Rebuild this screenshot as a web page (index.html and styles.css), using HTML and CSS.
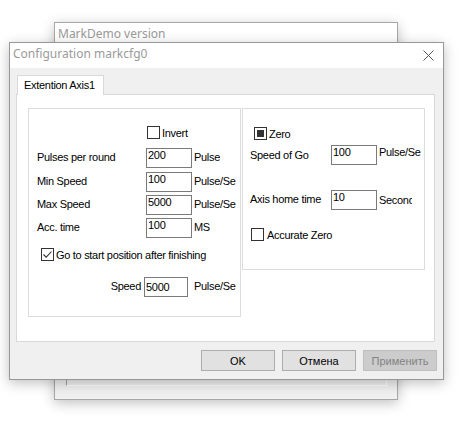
FILE: index.html
```html
<!DOCTYPE html>
<html>
<head>
<meta charset="utf-8">
<title>Configuration markcfg0</title>
<link rel="stylesheet" href="styles.css">
</head>
<body>
<div class="desk">
  <div class="win back">
    <div class="titlebar"><span class="title">MarkDemo version</span></div>
    <div class="back-body"><div class="sunken"></div></div>
  </div>
  <div class="win dialog">
    <div class="titlebar">
      <span class="title">Configuration markcfg0</span>
      <svg class="close" width="11" height="11" viewBox="0 0 11 11"><path d="M0.5 0.5L10.5 10.5M10.5 0.5L0.5 10.5" stroke="#555" stroke-width="1" fill="none"/></svg>
    </div>
    <div class="dlg-body">
      <div class="tabctl">
        <div class="tabstrip"><div class="tab">Extention Axis1</div></div>
        <div class="tabpage">
          <div class="group group-left">
            <div class="check-row invert-row"><span class="cb"></span><span class="cb-label">Invert</span></div>
            <div class="fields">
              <div class="field"><span class="lbl">Pulses per round</span><span class="tb">200</span><span class="unit">Pulse</span></div>
              <div class="field"><span class="lbl">Min Speed</span><span class="tb">100</span><span class="unit">Pulse/Se</span></div>
              <div class="field"><span class="lbl">Max Speed</span><span class="tb">5000</span><span class="unit">Pulse/Se</span></div>
              <div class="field"><span class="lbl">Acc. time</span><span class="tb">100</span><span class="unit">MS</span></div>
            </div>
            <div class="check-row go-row"><span class="cb"><svg width="11" height="11" viewBox="0 0 11 11"><path d="M1.5 5.5L4.2 8.2L9.5 2.5" stroke="#333" stroke-width="1.1" fill="none"/></svg></span><span class="cb-label">Go to start position after finishing</span></div>
            <div class="speed-row"><span class="speed-lbl">Speed</span><span class="tb tb-speed">5000</span><span class="unit speed-unit">Pulse/Se</span></div>
          </div>
          <div class="group group-right">
            <div class="check-row zero-row"><span class="cb"><span class="fill"></span></span><span class="cb-label">Zero</span></div>
            <div class="rfield go-speed"><span class="lbl">Speed of Go</span><span class="tb">100</span><span class="unit">Pulse/Se</span></div>
            <div class="rfield home-time"><span class="lbl">Axis home time</span><span class="tb">10</span><span class="unit">Seconds</span></div>
            <div class="check-row acc-row"><span class="cb"></span><span class="cb-label">Accurate Zero</span></div>
          </div>
        </div>
      </div>
      <div class="buttons">
        <button class="btn">OK</button>
        <button class="btn">Отмена</button>
        <button class="btn" disabled>Применить</button>
      </div>
    </div>
  </div>
</div>
</body>
</html>
```
FILE: styles.css
```css
* { box-sizing: border-box; }
html, body { margin: 0; padding: 0; background: #fff; }
body {
  font-family: "Liberation Sans", Arial, sans-serif;
  font-size: 11px;
  line-height: 13px;
  color: #000;
}
.desk { position: relative; width: 468px; height: 432px; overflow: hidden; background: #fff; }

.win {
  position: absolute;
  display: flex;
  flex-direction: column;
  background: #f0f0f0;
  border: 1px solid #a6a6a6;
  box-shadow: 0 3px 12px rgba(0, 0, 0, 0.25);
}
.back { left: 54px; top: 22px; width: 344px; height: 378px; }
.dialog { left: 9px; top: 42px; width: 435px; height: 338px; border-color: #979797; }

.titlebar {
  flex: none;
  display: flex;
  justify-content: space-between;
  align-items: flex-start;
  background: #fff;
  padding: 3px 9px 0 3px;
}
.back .titlebar { height: 19px; }
.dialog .titlebar { height: 25px; }
.title {
  font-family: "Noto Sans", "Open Sans", sans-serif;
  font-size: 12px;
  line-height: 16px;
  color: #9a9a9a;
  white-space: nowrap;
}
.close { margin-top: 4px; flex: none; }

.back-body { flex: 1; display: flex; padding: 0 10px 13px 11px; }
.sunken {
  flex: 1;
  border-left: 1px solid #a0a0a0;
  border-top: 1px solid #a0a0a0;
  border-right: 1px solid #fff;
  border-bottom: 1px solid #fff;
}

.dlg-body { flex: 1; display: flex; flex-direction: column; padding: 7px 6px 8px 6px; }
.tabctl { flex: 1; display: flex; flex-direction: column; margin-right: 2px; }
.tabstrip { flex: none; height: 19px; display: flex; padding-left: 1px; }
.tab {
  position: relative;
  z-index: 1;
  width: 87px;
  height: 20px;
  border: 1px solid #d9d9d9;
  border-bottom: 0;
  background: #fff;
  padding: 3px 0 0 6px;
  letter-spacing: -0.3px;
  white-space: nowrap;
}
.tabpage {
  flex: 1;
  display: flex;
  align-items: flex-start;
  gap: 1px;
  background: #fff;
  border: 1px solid #d9d9d9;
  padding: 13px 0 0 11px;
}

.group {
  flex: none;
  display: flex;
  flex-direction: column;
  align-items: flex-start;
  border: 1px solid #dcdcdc;
  background: #fff;
  letter-spacing: -0.3px;
  white-space: nowrap;
}
.group-left { width: 213px; height: 209px; padding-left: 8px; }
.group-right { width: 183px; height: 162px; padding-left: 7px; }

.check-row { display: flex; align-items: flex-start; }
.cb {
  flex: none;
  width: 13px;
  height: 13px;
  border: 1px solid #333;
  background: #fff;
  display: flex;
  align-items: center;
  justify-content: center;
}
.cb .fill { width: 7px; height: 7px; background: #333; }
.cb-label { margin-left: 2px; padding-top: 1px; }

.invert-row { margin: 17px 0 0 110px; }
.fields { display: flex; flex-direction: column; margin-top: 8px; }
.field { display: flex; align-items: flex-start; height: 20px; }
.field + .field { margin-top: 3px; }
.field:nth-child(2) { margin-top: 4px; }
.field .lbl { width: 109px; padding-top: 3px; }

.tb {
  flex: none;
  width: 46px;
  height: 20px;
  border: 1px solid #7a7a7a;
  background: #fff;
  padding: 0 0 0 1px;
}
.unit { margin-left: 2px; padding-top: 3px; overflow: hidden; }

.go-row { margin: 10px 0 0 4px; }
.speed-row { display: flex; align-items: flex-start; margin-top: 15px; }
.speed-lbl { width: 104px; text-align: right; padding-top: 3px; margin-right: 3px; }
.tb-speed { width: 44px; padding-top: 3px; }
.speed-unit { margin-left: 6px; }

.zero-row { margin: 18px 0 0 4px; }
.rfield { display: flex; align-items: flex-start; height: 20px; }
.rfield .lbl { width: 81px; padding-top: 4px; }
.rfield .unit { width: 44px; }
.go-speed { margin-top: 4px; }
.go-speed .unit { padding-top: 1px; }
.home-time { margin-top: 25px; }
.home-time .lbl { padding-top: 3px; }
.home-time .unit { width: 33px; padding-top: 4px; }
.acc-row { margin: 18px 0 0 1px; }
.acc-row .cb-label { margin-left: 3px; }

.buttons { flex: none; display: flex; justify-content: flex-end; gap: 7px; margin-top: 8px; }
.btn {
  width: 74px;
  height: 21px;
  padding: 0;
  border: 1px solid #adadad;
  background: #e1e1e1;
  font-family: "Liberation Sans", Arial, sans-serif;
  font-size: 11px;
  color: #000;
}
.btn:disabled { background: #cccccc; border-color: #bfbfbf; color: #838383; }
```
